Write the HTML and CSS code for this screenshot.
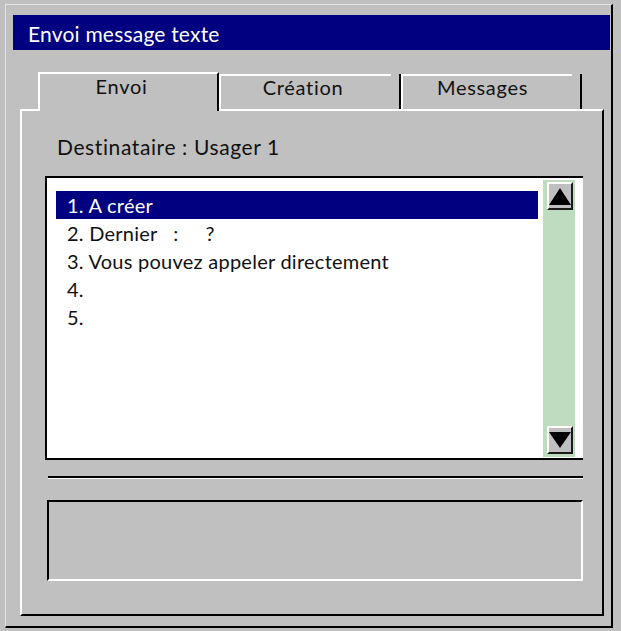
FILE: index.html
```html
<!DOCTYPE html>
<html lang="fr">
<head>
    <meta charset="UTF-8">
    <title>Envoi message texte</title>
    <link rel="stylesheet" href="styles.css">
</head>
<body>
    <div class="window">
        <div class="titlebar">Envoi message texte</div>

        <div class="tabs">
            <div class="tab active">Envoi</div>
            <div class="tab tab-creation">Création</div>
            <div class="tab tab-messages">Messages</div>
        </div>

        <div class="panel">
            <div class="recipient">Destinataire : Usager 1</div>

            <div class="listbox">
                <ul class="items">
                    <li class="selected">1. A créer</li>
                    <li>2. Dernier   :     ?</li>
                    <li>3. Vous pouvez appeler directement</li>
                    <li>4.</li>
                    <li>5.</li>
                </ul>
                <div class="scrollbar">
                    <div class="scroll-btn">
                        <svg width="22" height="17" viewBox="0 0 22 17"><polygon points="11,0 22,17 0,17" fill="#000"/></svg>
                    </div>
                    <div class="scroll-btn">
                        <svg width="22" height="16" viewBox="0 0 22 16"><polygon points="0,0 22,0 11,16" fill="#000"/></svg>
                    </div>
                </div>
            </div>

            <div class="separator"></div>

            <div class="message-box"></div>
        </div>
    </div>
</body>
</html>
```

FILE: styles.css
```css
* {
    margin: 0;
    padding: 0;
    box-sizing: border-box;
}

body {
    font-family: Lato, "Noto Sans", sans-serif;
    background: #c0c0c0;
    color: #111;
}

.window {
    margin: 4px 0 0 5px;
    width: 608px;
    height: 624px;
    border-top: 1px solid #e4e4e4;
    border-left: 1px solid #e4e4e4;
    border-right: 2px solid #000;
    border-bottom: 2px solid #000;
}

.titlebar {
    margin: 10px 1px 0 7px;
    height: 35px;
    padding: 2px 0 0 15px;
    background: #000080;
    color: #fff;
    font-size: 21px;
    line-height: 33px;
    letter-spacing: 0.2px;
}

.tabs {
    display: flex;
    align-items: flex-end;
    height: 37px;
    margin: 22px 0 0 32px;
}

.tab {
    position: relative;
    height: 35px;
    padding: 2px 14px 0 0;
    border-left: 2px solid #fff;
    border-right: 2px solid #000;
    text-align: center;
    font-size: 20px;
    line-height: 22px;
    letter-spacing: 0.7px;
}

.tab::before {
    content: "";
    position: absolute;
    top: 0;
    left: -2px;
    right: 8px;
    height: 2px;
    background: #fff;
}

.tab.active {
    z-index: 1;
    width: 181px;
    height: 39px;
    margin-bottom: -2px;
    padding-top: 1px;
    border-top: 2px solid #fff;
    background: #c0c0c0;
}

.tab.active::before {
    display: none;
}

.tab-creation { width: 182px; }
.tab-messages { width: 181px; padding-right: 18px; }

.panel {
    margin-left: 14px;
    width: 584px;
    height: 507px;
    border-top: 2px solid #fff;
    border-left: 2px solid #fff;
    border-right: 2px solid #000;
    border-bottom: 2px solid #000;
    padding-top: 23px;
}

.recipient {
    padding-left: 35px;
    font-size: 21px;
    line-height: 26px;
    letter-spacing: 0.6px;
}

.listbox {
    display: flex;
    margin: 16px 0 0 23px;
    width: 538px;
    height: 284px;
    background: #fff;
    border-top: 2px solid #000;
    border-left: 2px solid #000;
    border-bottom: 2px solid #000;
}

.items {
    list-style: none;
    padding: 13px 0 0 9px;
    font-size: 20px;
    line-height: 28px;
    letter-spacing: 0.25px;
}

.items li {
    width: 482px;
    padding-left: 11px;
    white-space: pre;
}

.items li.selected {
    background: #000080;
    color: #fff;
}

.scrollbar {
    display: flex;
    flex-direction: column;
    justify-content: space-between;
    width: 32px;
    margin: 2px 0 1px 5px;
    padding: 2px 2px 3px 4px;
    background: #c0dcc0;
}

.scroll-btn {
    display: flex;
    align-items: center;
    justify-content: center;
    width: 26px;
    height: 28px;
    background: #c0c0c0;
    border-top: 2px solid #fff;
    border-left: 2px solid #fff;
    border-right: 2px solid #1a1a1a;
    border-bottom: 2px solid #1a1a1a;
}

.separator {
    margin: 16px 0 0 26px;
    width: 535px;
    height: 3px;
    border-top: 2px solid #000;
    border-bottom: 1px solid #fff;
}

.message-box {
    margin: 21px 0 0 25px;
    width: 536px;
    height: 81px;
    border-top: 2px solid #000;
    border-left: 2px solid #000;
    border-right: 2px solid #fff;
    border-bottom: 2px solid #fff;
}
```
